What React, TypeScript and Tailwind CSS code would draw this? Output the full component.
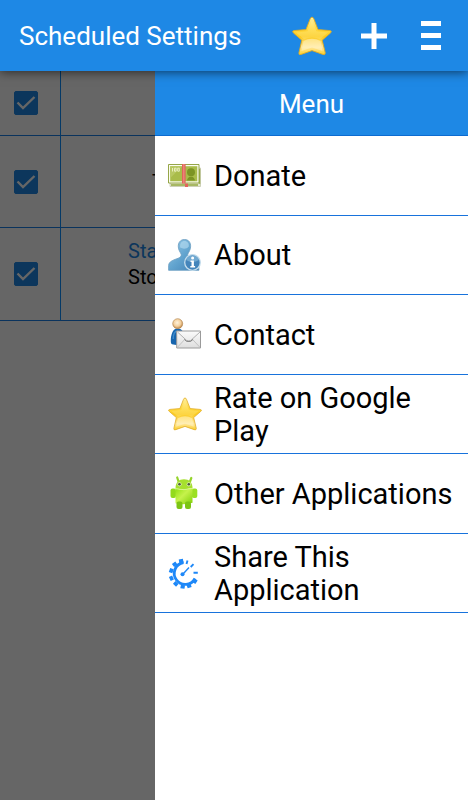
import { useId, useState } from 'react';

/**
 * Props shared by the drawn icons
 */
interface IIconProps {
  className?: string;
}

function StarIcon({ className }: IIconProps): React.ReactElement {
  const id = useId();
  return (
    <svg className={className} viewBox="0 0 40 40" aria-hidden="true">
      <defs>
        <linearGradient id={id} x1="0" y1="0" x2="0" y2="1">
          <stop offset="0" stopColor="#fff0a0" />
          <stop offset="0.32" stopColor="#ffd83e" />
          <stop offset="0.52" stopColor="#fccb1e" />
          <stop offset="0.8" stopColor="#ffe79a" />
          <stop offset="1" stopColor="#fccf2a" />
        </linearGradient>
      </defs>
      <path
        d="M20 1.2 Q21.2 1.2 21.8 2.8 L26 13.6 L38 14.6 Q40.4 15.1 38.6 16.9 L30.2 24.2 L33.3 37 Q33.2 39.5 30.8 38.4 L20 34.6 L9.2 38.4 Q6.6 39.5 6.9 37 L9.8 24.2 L1.4 16.9 Q-.4 15.1 2 14.6 L14 13.6 L18.2 2.8 Q18.8 1.2 20 1.2Z"
        fill={`url(#${id})`}
        stroke="#dfaa24"
        strokeWidth="0.9"
      />
      <path
        d="M20 4 L24.5 15.2 L36 16.4 L28 23.2 Q20 20 12 23.2 L4 16.4 L15.5 15.2Z"
        fill="#fff3b0"
        opacity="0.25"
      />
      <path d="M11.5 25 Q20 20.5 28.5 25 L30.5 35 L20 31.5 L9.5 35Z" fill="#fff5d0" opacity="0.5" />
    </svg>
  );
}

function DonateIcon(): React.ReactElement {
  return (
    <svg className="size-[34px] shrink-0" viewBox="0 0 34 34" aria-hidden="true">
      <path d="M2 10h30.5v18.5H2z" fill="#e6e8d2" stroke="#c3c6aa" strokeWidth="0.8" />
      <path d="M3 26.2h27v1.6H3zM31.2 11h1v15h-1z" fill="#93a83f" />
      <path d="M.5 6.500h30.500v18.500H.500z" fill="#fbfcf0" stroke="#8a9c34" strokeWidth="0.900" />
      <path d="M2.200 8.200h27.100v15.100H2.200z" fill="#a9bc4a" />
      <path d="M2.200 8.200h12L2.200 20z" fill="#b8c862" />
      <circle cx="23" cy="14.200" r="4" fill="#7c9424" />
      <path d="M19 22.500c.3-2.400 1.800-3 2.600-3.800h2.800c.8.800 2.300 1.400 2.600 3.800z" fill="#7c9424" />
      <path d="M4.500 10v3.500M6.500 10.200h1.600v3H6.500zM9.700 10.200h1.600v3H9.700z" fill="none" stroke="#eef2c8" strokeWidth="0.900" />
      <path d="M14 6h3.600v19.500H14z" fill="#e0655a" />
      <path d="M15.200 6h1.200v19.500h-1.200z" fill="#ee8b80" />
      <path d="M17 25.500h3V29h-3z" fill="#e0655a" />
    </svg>
  );
}

function AboutIcon(): React.ReactElement {
  return (
    <svg className="size-[34px] shrink-0" viewBox="0 0 34 34" aria-hidden="true">
      <defs>
        <linearGradient id="about-body" x1="0" y1="0" x2="1" y2="1">
          <stop offset="0" stopColor="#9bcbe8" />
          <stop offset="0.5" stopColor="#62a4cf" />
          <stop offset="1" stopColor="#3f7fb4" />
        </linearGradient>
      </defs>
      <path
        d="M16.5 1.5c4.3 0 6.3 3.2 6.1 7.2-.2 3.2-1.7 5.2-2.7 7.2-.8 2 .4 3.6 3 4.6 4.5 1.7 8 3 8 7v4.800H.6v-4.800c.2-3.800 4-5.200 8.400-6.800 3.400-1.200 4.800-2.600 4-4.800-1-2.200-2.600-4-2.700-7.200-.2-4 2-7.200 6.200-7.200z"
        fill="url(#about-body)"
        stroke="#6a9dc2"
        strokeWidth="0.8"
      />
      <path d="M16.5 3c3 0 4.6 2.4 4.3 5.4-1.8 2.4-5.4 3-8.6 1.2C11.5 5.500 13.500 3 16.500 3z" fill="#b9def2" opacity="0.6" />
      <circle cx="24.500" cy="24.500" r="7.800" fill="#4485bb" stroke="#c4ddec" strokeWidth="1.300" />
      <path d="M18 22a7 7 0 0 1 13 0c-4 2.500-9 2.500-13 0z" fill="#8fc1e0" opacity="0.6" />
      <circle cx="24.600" cy="20" r="1.500" fill="#fff" />
      <path d="M22.500 22.500h3.400v5.500h1.200v1.500h-4.800V28h1.200v-4h-1z" fill="#fff" />
    </svg>
  );
}

function ContactIcon(): React.ReactElement {
  return (
    <svg className="size-[34px] shrink-0" viewBox="0 0 34 34" aria-hidden="true">
      <defs>
        <radialGradient id="contact-head" cx="0.45" cy="0.4" r="0.6">
          <stop offset="0" stopColor="#fff3dc" />
          <stop offset="0.6" stopColor="#f3cf9c" />
          <stop offset="1" stopColor="#b98143" />
        </radialGradient>
        <linearGradient id="contact-mail" x1="0" y1="0" x2="0" y2="1">
          <stop offset="0" stopColor="#fbfbfb" />
          <stop offset="1" stopColor="#dedede" />
        </linearGradient>
      </defs>
      <path d="M2.800 24c0-6 1.800-12.500 6.700-12.500s7.200 4.500 7.200 11v4.800c-4 1-9.500 1-12.700 0-1-.6-1.200-1.800-1.200-3.300z" fill="#1765ae" />
      <path d="M5.200 22c0-4.500 1.600-8 4.600-8" fill="none" stroke="#3f8bcb" strokeWidth="1.400" />
      <circle cx="9.700" cy="6.700" r="5" fill="url(#contact-head)" stroke="#b08450" strokeWidth="0.600" />
      <path d="M8.700 14h23.800v17H8.700z" fill="url(#contact-mail)" stroke="#9a9a9a" strokeWidth="1" />
      <path d="M9.500 15l9.200 8.500q2 1.300 4 0L32 15" fill="none" stroke="#a9a9a9" strokeWidth="0.900" />
      <path d="M9.500 30.200l7.500-8M31.800 30.200l-7.500-8" fill="none" stroke="#bdbdbd" strokeWidth="0.900" />
      <path d="M16.500 22.500l2.200 1.800h4l2.200-1.800" fill="none" stroke="#777" strokeWidth="1" />
    </svg>
  );
}

function AndroidIcon(): React.ReactElement {
  return (
    <svg className="size-[34px] shrink-0" viewBox="0 0 34 34" aria-hidden="true">
      <defs>
        <linearGradient id="android-body" x1="0" y1="0" x2="1" y2="1">
          <stop offset="0" stopColor="#8fe010" />
          <stop offset="0.450" stopColor="#c6f24c" />
          <stop offset="1" stopColor="#80d008" />
        </linearGradient>
      </defs>
      <path d="M10.500 5.500L9.200 1.500M22 5.500l1.300-3.500" stroke="#95d42c" strokeWidth="2.200" strokeLinecap="round" />
      <path d="M7.500 12.500c0-6.500 3.400-9.300 8.500-9.300s8.500 3 8.500 8.800l-8.500 1.500z" fill="#a6e02e" />
      <rect x="2.500" y="12.500" width="5.500" height="9.500" rx="2" fill="#93da1c" />
      <rect x="23.800" y="12.500" width="5.500" height="9.500" rx="2" fill="#9be022" />
      <path d="M7.500 12.500q8.500 2 17-.5v14.800q-8.500 2.500-17 .4z" fill="url(#android-body)" />
      <path d="M7.500 12.800q8.500 2 17-.5" fill="none" stroke="#e0f79c" strokeWidth="0.700" />
      <rect x="8.500" y="25.500" width="6" height="7.500" rx="2" fill="#7cc414" />
      <rect x="17" y="25.500" width="6" height="7.500" rx="2" fill="#7cc414" />
      <circle cx="11.500" cy="8.300" r="2.100" fill="#d9edb0" />
      <circle cx="20.800" cy="8.300" r="2.100" fill="#d9edb0" />
      <circle cx="11.500" cy="8.300" r="1.300" fill="#4c5a35" />
      <circle cx="20.800" cy="8.300" r="1.300" fill="#4c5a35" />
    </svg>
  );
}

function GearClockIcon(): React.ReactElement {
  return (
    <svg className="size-[34px] shrink-0" viewBox="0 0 34 34" aria-hidden="true">
      <g fill="none" stroke="#1e88f8">
        <path d="M15.500 6.500A11 11 0 1 0 27 22.500" strokeWidth="2.800" />
        <path
          d="M13.600 7.500L12.800 3.200M7.800 9.800L5.600 6.800M5 15.300L1.500 14M5 21.500L1.800 23M9 26.500l-2.500 2.700M15 29l-.6 3.500M20.500 28.300l1.200 3.300M25.500 24.300l3 2"
          strokeWidth="4.200"
        />
        <path d="M18.500 8l1-3.500M22.700 11l2.800-2.800M25.500 16.800h4.300" strokeWidth="1.900" />
        <path d="M15.500 17.500l5.500-6" strokeWidth="1.400" />
      </g>
      <circle cx="14.500" cy="18.300" r="2" fill="#1e88f8" />
    </svg>
  );
}

/**
 * Entries of the slide-in menu
 */
const MENU_ITEMS: { label: string; icon: React.ReactElement }[] = [
  { label: 'Donate', icon: <DonateIcon /> },
  { label: 'About', icon: <AboutIcon /> },
  { label: 'Contact', icon: <ContactIcon /> },
  { label: 'Rate on Google Play', icon: <StarIcon className="size-[34px] shrink-0" /> },
  { label: 'Other Applications', icon: <AndroidIcon /> },
  { label: 'Share This Application', icon: <GearClockIcon /> },
];

interface IScheduleRowProps {
  name: string;
  height: string;
  children?: React.ReactNode;
}

function ScheduleRow({ name, height, children }: IScheduleRowProps): React.ReactElement {
  const [enabled, setEnabled] = useState(true);

  return (
    <tr className={height}>
      <td className="w-[61px] border-r border-b border-r-[#0a90ff] border-b-[#1a80e8] p-0">
        <label className="relative ml-3.5 block size-6">
          <input
            type="checkbox"
            aria-label={name}
            checked={enabled}
            onChange={() => setEnabled(prev => !prev)}
            className="peer block size-6 appearance-none rounded-xs border border-[#1e88e5] checked:bg-[#1e88e5]"
          />
          <svg
            className="pointer-events-none absolute inset-0 hidden size-6 peer-checked:block"
            viewBox="0 0 24 24"
            aria-hidden="true"
          >
            <path d="M3.500 11.500l5.500 5.500L20.500 6" fill="none" stroke="#fff" strokeWidth="2.400" />
          </svg>
        </label>
      </td>
      <td className="border-b border-[#1a80e8] p-0 pl-[67px] text-xl leading-[26px] whitespace-nowrap">
        {children}
      </td>
    </tr>
  );
}

function Header(): React.ReactElement {
  return (
    <header className="relative z-20 flex h-[71px] items-center bg-[#1e88e5] pr-[27px] pl-[19px] text-white shadow-[0_1px_10px_rgba(0,0,0,0.6)]">
      <h1 className="flex-1 truncate text-[26px] leading-8">Scheduled Settings</h1>
      <button type="button" aria-label="Rate" className="mr-[29px]">
        <StarIcon className="size-10" />
      </button>
      <button type="button" aria-label="Add" className="mr-[34px]">
        <svg className="size-[26px]" viewBox="0 0 26 26" aria-hidden="true">
          <path d="M13 0v26M0 13h26" stroke="#fff" strokeWidth="5" />
        </svg>
      </button>
      <button type="button" aria-label="Open menu" className="flex w-5 flex-col gap-[7px]">
        <span className="h-[5px] bg-white" />
        <span className="h-[5px] bg-white" />
        <span className="h-[5px] bg-white" />
      </button>
    </header>
  );
}

function MenuDrawer(): React.ReactElement {
  return (
    <aside className="absolute inset-y-0 right-0 left-[155px] bg-white">
      <h2 className="flex h-[65px] items-center justify-center border-b border-[#0d6bd0] bg-[#1e88e5] pt-0.5 text-[26px] text-white">
        Menu
      </h2>
      <ul className="grid h-[477px] grid-rows-6">
        {MENU_ITEMS.map(({ label, icon }) => (
          <li key={label} className="border-b border-[#1873dc]">
            <button type="button" className="flex size-full items-center gap-3 pr-3 pl-[13px] text-left">
              {icon}
              <span className="pt-0.5 text-[29px] leading-[33px]">{label}</span>
            </button>
          </li>
        ))}
      </ul>
    </aside>
  );
}

export default function App(): React.ReactElement {
  return (
    <div className="flex min-h-screen flex-col bg-white font-['Roboto',sans-serif] text-black">
      <Header />
      <main className="relative flex-1 overflow-hidden">
        <table className="w-full table-fixed border-separate border-spacing-0">
          <tbody>
            <ScheduleRow name="Schedule 1" height="h-[65px]" />
            <ScheduleRow name="Schedule 2" height="h-[92px]">
              <div className="pl-6">T</div>
            </ScheduleRow>
            <ScheduleRow name="Schedule 3" height="h-[93px]">
              <div className="text-[#1e88e5]">Start</div>
              <div>Stop</div>
              <div className="h-5" />
            </ScheduleRow>
          </tbody>
        </table>
        <div className="absolute inset-0 bg-black/60" />
        <MenuDrawer />
      </main>
    </div>
  );
}
